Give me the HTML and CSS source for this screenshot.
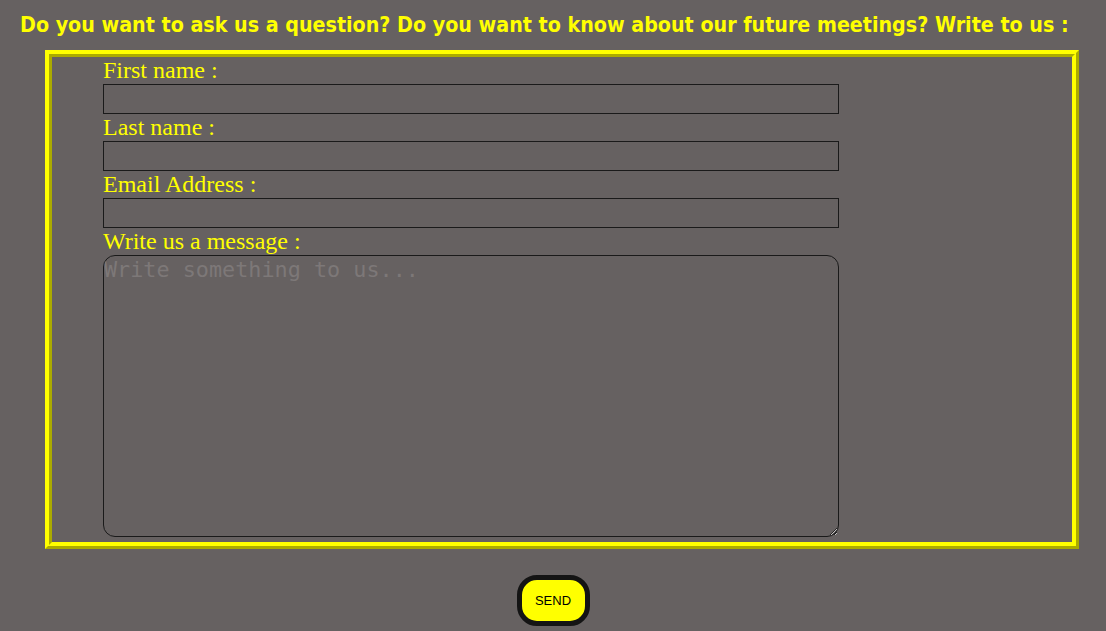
FILE: index.html
```html
<!DOCTYPE html>
<html lang="en">
<head>
<meta charset="utf-8">
<title>Contact</title>
<link rel="stylesheet" href="styles.css">
</head>
<body>
<h1 class="title">Do you want to ask us a question? Do you want to know about our future meetings? Write to us :</h1>
<form class="contact">
  <div class="fields">
    <label class="label" for="fn">First name :</label>
    <input class="field" id="fn" type="text">
    <label class="label" for="ln">Last name :</label>
    <input class="field" id="ln" type="text">
    <label class="label" for="em">Email Address :</label>
    <input class="field" id="em" type="text">
    <label class="label" for="msg">Write us a message :</label>
    <textarea class="message" id="msg" placeholder="Write something to us..."></textarea>
  </div>
</form>
<div class="actions">
  <button class="send" type="button">SEND</button>
</div>
</body>
</html>
```
FILE: styles.css
```css
html, body {
  margin: 0;
  padding: 0;
}
body {
  background: #666161;
  width: 1106px;
  height: 631px;
  overflow: hidden;
}
.title {
  margin: 0;
  padding: 12px 0 0 20px;
  height: 38px;
  box-sizing: border-box;
  font-family: "DejaVu Sans Condensed", "DejaVu Sans", sans-serif;
  font-stretch: condensed;
  font-weight: bold;
  font-size: 21.25px;
  line-height: 26px;
  color: #ffff00;
  white-space: nowrap;
}
.contact {
  margin: 12px 0 0 45px;
  width: 1034px;
  height: 499px;
  box-sizing: border-box;
  border: 7px ridge #ffff00;
}
.fields {
  display: flex;
  flex-direction: column;
  align-items: flex-start;
  padding: 0 0 0 51px;
}
.label {
  font-family: "Liberation Serif", "Times New Roman", serif;
  font-size: 24px;
  line-height: 27px;
  color: #ffff00;
}
.field {
  width: 736px;
  height: 30px;
  box-sizing: border-box;
  margin: 0;
  background: transparent;
  border: 1px solid #1a1a1a;
  border-radius: 0;
  padding: 0;
}
.message {
  width: 736px;
  height: 282px;
  box-sizing: border-box;
  margin: 0;
  background: transparent;
  border: 1px solid #1a1a1a;
  border-radius: 12px;
  padding: 1px 0;
  font-family: "DejaVu Sans Mono", "Liberation Mono", monospace;
  font-size: 21.8px;
  line-height: 26px;
  resize: vertical;
}
.message::placeholder {
  color: #7d7878;
}
.actions {
  display: flex;
  justify-content: center;
  padding-top: 26px;
}
.send {
  width: 73px;
  height: 51px;
  box-sizing: border-box;
  background: #ffff00;
  border: 5px solid #141414;
  border-radius: 20px;
  font-family: "Liberation Sans", Arial, sans-serif;
  font-size: 13px;
  color: #000;
  padding: 0;
}
```
